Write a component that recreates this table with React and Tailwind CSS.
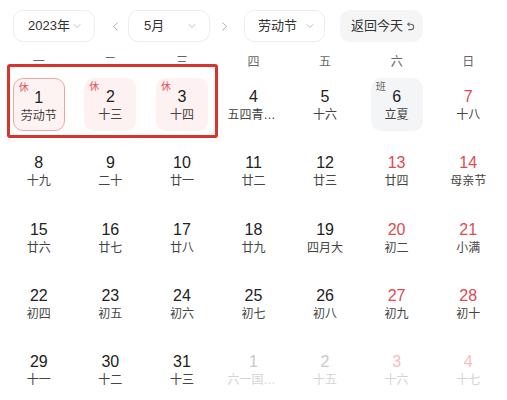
import { ChevronDown, ChevronLeft, ChevronRight } from 'lucide-react';

const weekdays = ['一', '二', '三', '四', '五', '六', '日'];

// May 2023, starting Monday 1st
const days = [
  { d: 1, l: '劳动节', tag: '休', selected: true },
  { d: 2, l: '十三', tag: '休' },
  { d: 3, l: '十四', tag: '休' },
  { d: 4, l: '五四青年节' },
  { d: 5, l: '十六' },
  { d: 6, l: '立夏', tag: '班' },
  { d: 7, l: '十八' },
  { d: 8, l: '十九' },
  { d: 9, l: '二十' },
  { d: 10, l: '廿一' },
  { d: 11, l: '廿二' },
  { d: 12, l: '廿三' },
  { d: 13, l: '廿四' },
  { d: 14, l: '母亲节' },
  { d: 15, l: '廿六' },
  { d: 16, l: '廿七' },
  { d: 17, l: '廿八' },
  { d: 18, l: '廿九' },
  { d: 19, l: '四月大' },
  { d: 20, l: '初二' },
  { d: 21, l: '小满' },
  { d: 22, l: '初四' },
  { d: 23, l: '初五' },
  { d: 24, l: '初六' },
  { d: 25, l: '初七' },
  { d: 26, l: '初八' },
  { d: 27, l: '初九' },
  { d: 28, l: '初十' },
  { d: 29, l: '十一' },
  { d: 30, l: '十二' },
  { d: 31, l: '十三' },
  { d: 1, l: '六一国际儿童节', other: true },
  { d: 2, l: '十五', other: true },
  { d: 3, l: '十六', other: true },
  { d: 4, l: '十七', other: true },
];

function Select({ label, width, padL, padR }) {
  return (
    <div
      className={`flex items-center justify-between h-[32px] rounded-[10px] border border-[#ededed] bg-white text-[13px] text-[#333] ${width} ${padL} ${padR}`}
    >
      <span>{label}</span>
      <ChevronDown size={12} strokeWidth={1.4} className="text-[#a0a0a0]" />
    </div>
  );
}

function ReturnIcon() {
  return (
    <svg width="9" height="9" viewBox="0 0 10 10" fill="none" stroke="#666" strokeWidth="1.2" strokeLinecap="round" strokeLinejoin="round">
      <path d="M3.5 1 L2 2.5 L3.5 4" />
      <path d="M2 2.5 H5.5 A3 3 0 0 1 5.5 8.5 H3" />
    </svg>
  );
}

function DayCell({ day, col }) {
  const weekend = col >= 5 && day.tag !== '班';
  let box = 'bg-transparent';
  if (day.tag === '休') box = 'bg-[#fdf1f1]';
  if (day.tag === '班') box = 'bg-[#f4f5f7]';
  if (day.selected) box = 'bg-[#fdf3f3] border-[1.5px] border-[#eba7a7]';

  let num = weekend ? 'text-[#e0494e]' : 'text-[#222]';
  let lunar = 'text-[#444]';
  if (day.other) {
    num = weekend ? 'text-[#f3c0c0]' : 'text-[#c9c9c9]';
    lunar = 'text-[#d4d4d4]';
  }

  return (
    <div className="flex justify-center">
      <div className={`relative w-[52px] h-[53px] rounded-[10px] flex flex-col items-center pt-[9px] ${box}`}>
        {day.tag && (
          <span
            className={`absolute left-[5px] top-[4px] text-[10px] leading-[10px] ${
              day.tag === '休' ? 'text-[#e2555a]' : 'text-[#666]'
            }`}
          >
            {day.tag}
          </span>
        )}
        <span className={`text-[16px] leading-[20px] ${num}`}>{day.d}</span>
        <span className={`w-[52px] text-center text-[12px] leading-[16px] whitespace-nowrap overflow-hidden text-ellipsis ${lunar}`}>
          {day.l}
        </span>
      </div>
    </div>
  );
}

export default function App() {
  return (
    <div
      className="relative w-[507px] h-[400px] bg-white overflow-hidden"
      style={{ fontFamily: '"Liberation Sans", "Noto Sans CJK SC", sans-serif' }}
    >
      <div className="flex items-center pt-[10px] pl-[13px]">
        <Select label="2023年" width="w-[82px]" padL="pl-[14px]" padR="pr-[11px]" />
        <button className="ml-[10px] w-[20px] flex justify-center text-[#a0a0a0]">
          <ChevronLeft size={15} strokeWidth={1.4} />
        </button>
        <div className="ml-[3px]">
          <Select label="5月" width="w-[82px]" padL="pl-[15px]" padR="pr-[11px]" />
        </div>
        <button className="ml-[4px] w-[20px] flex justify-center text-[#a0a0a0]">
          <ChevronRight size={15} strokeWidth={1.4} />
        </button>
        <div className="ml-[10px]">
          <Select label="劳动节" width="w-[81px]" padL="pl-[13px]" padR="pr-[8px]" />
        </div>
        <button className="ml-[15px] h-[32px] w-[83px] rounded-[10px] bg-[#f5f5f5] flex items-center pl-[11px] gap-[3px] text-[13px] text-[#333]">
          返回今天
          <ReturnIcon />
        </button>
      </div>

      <div className="grid grid-cols-7 px-[3px] mt-[12px]">
        {weekdays.map((w) => (
          <div key={w} className="text-center text-[12px] leading-[16px] text-[#666]">
            {w}
          </div>
        ))}
      </div>

      <div className="grid grid-cols-7 px-[3px] mt-[8px] gap-y-[13.25px]">
        {days.map((day, i) => (
          <DayCell key={i} day={day} col={i % 7} />
        ))}
      </div>

      <div className="absolute left-[7px] top-[64px] w-[211px] h-[74px] border-[3px] border-[#d8342b] rounded-[3px] z-10" />
    </div>
  );
}
